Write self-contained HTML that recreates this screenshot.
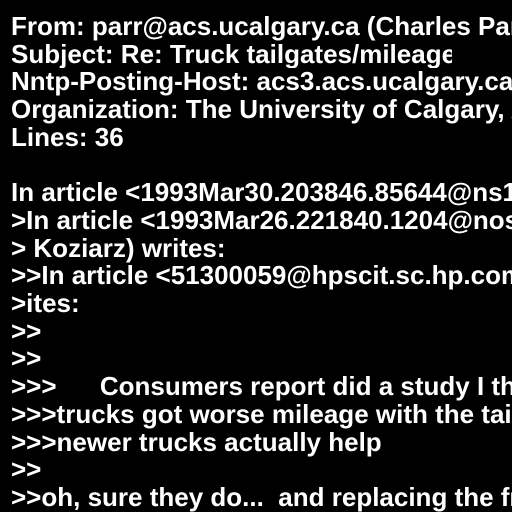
<!DOCTYPE html><html><head><style>
html,body{margin:0;background:#000;width:512px;height:512px;overflow:hidden}
.w{position:absolute;left:0;top:0;width:512px;height:512px;overflow:hidden}
pre{margin:0;position:absolute;left:11px;top:13px;font:bold 26px/27.7px "Liberation Sans",sans-serif;color:#fff;white-space:pre}
.c{display:inline-block;width:441px;overflow:hidden;vertical-align:top}
</style></head><body><div class="w"><pre>From: parr@acs.ucalgary.ca (Charles Parr)
<span class="c">Subject: Re: Truck tailgates/mileage</span>
Nntp-Posting-Host: acs3.acs.ucalgary.ca
Organization: The University of Calgary, Alberta
Lines: 36

In article &lt;1993Mar30.203846.85644@ns1.nodak.edu&gt;
&gt;In article &lt;1993Mar26.221840.1204@nosc.mil&gt;
&gt; Koziarz) writes:
&gt;&gt;In article &lt;51300059@hpscit.sc.hp.com&gt;
&gt;ites:
&gt;&gt;
&gt;&gt;
&gt;&gt;&gt;      Consumers report did a study I think
&gt;&gt;&gt;trucks got worse mileage with the tailgate
&gt;&gt;&gt;newer trucks actually help
&gt;&gt;
&gt;&gt;oh, sure they do...  and replacing the front
</pre></div></body></html>
